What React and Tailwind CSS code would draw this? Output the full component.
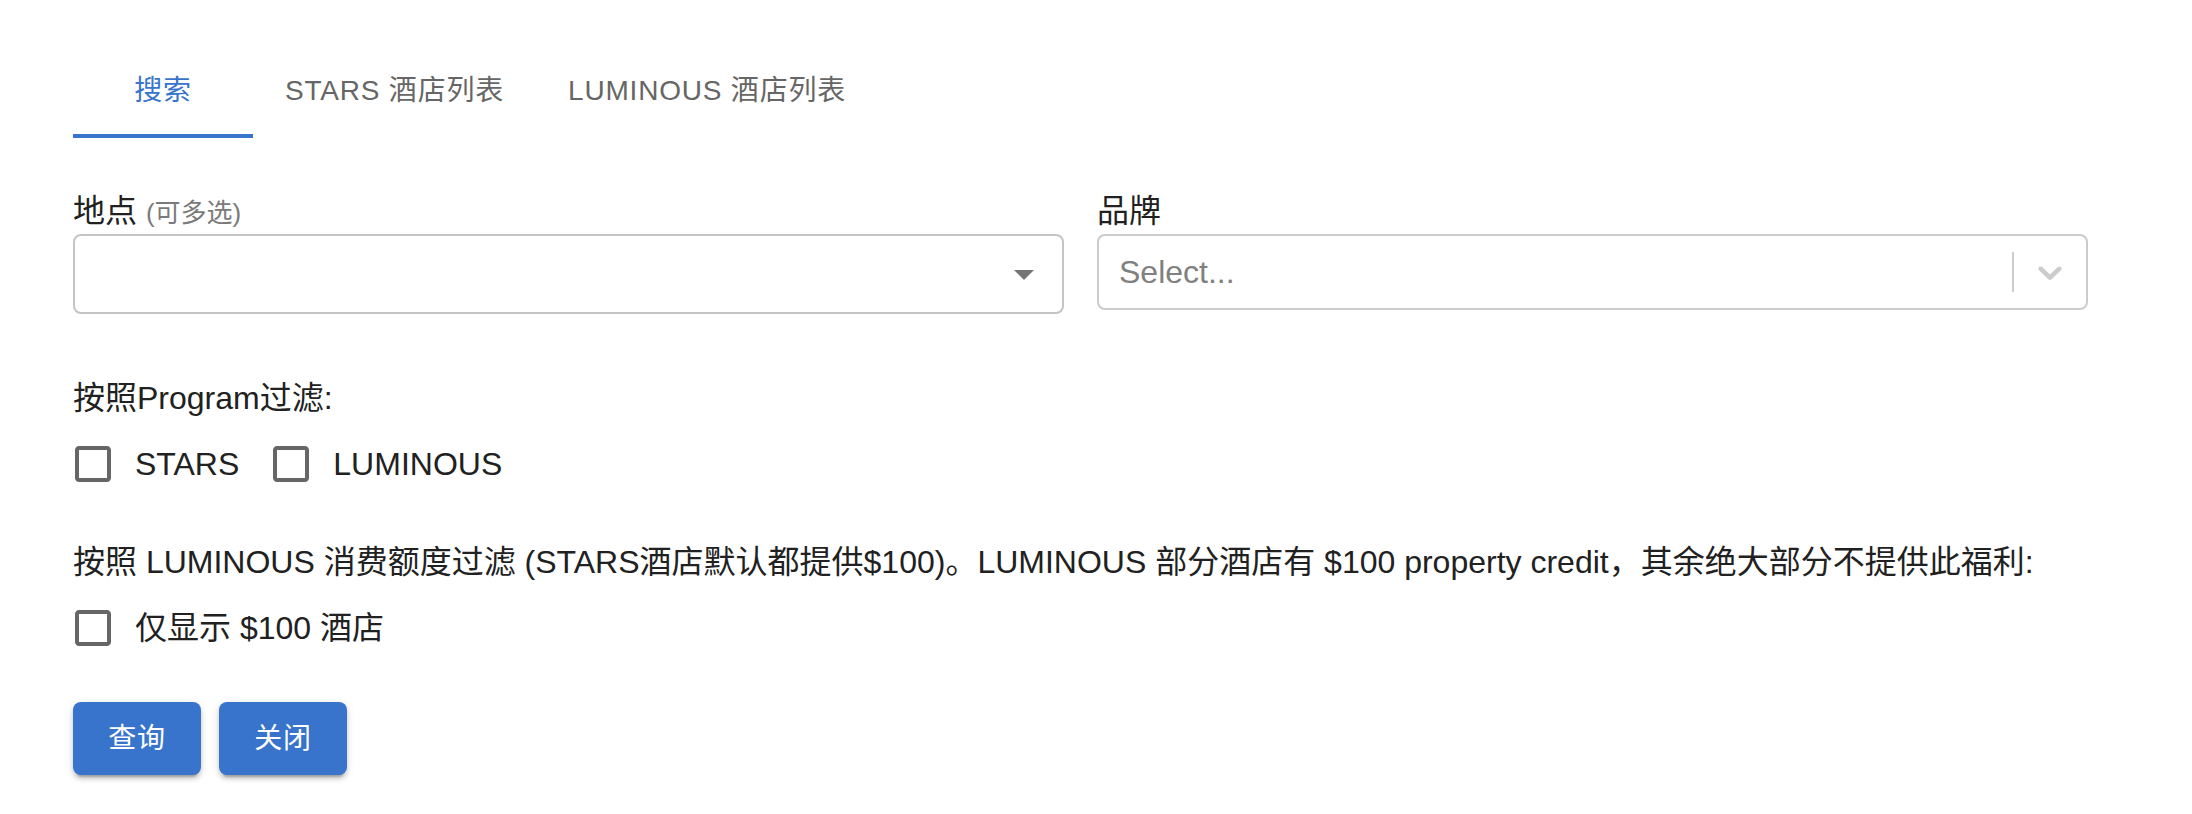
import React, { useState } from 'react';

const FONT = { fontFamily: '"Liberation Sans", "Noto Sans CJK SC", sans-serif' };

function Box({ checked }) {
  return (
    <svg width="48" height="48" viewBox="0 0 24 24" className="fill-[#666666]">
      {checked ? (
        <path d="M19 3H5c-1.11 0-2 .9-2 2v14c0 1.1.89 2 2 2h14c1.11 0 2-.9 2-2V5c0-1.1-.89-2-2-2zm-9 14l-5-5 1.41-1.41L10 14.17l7.59-7.59L19 8l-9 9z" />
      ) : (
        <path d="M19 5v14H5V5h14m0-2H5c-1.11 0-2 .9-2 2v14c0 1.1.89 2 2 2h14c1.1 0 2-.9 2-2V5c0-1.1-.9-2-2-2z" />
      )}
    </svg>
  );
}

function Check({ label, checked, onChange }) {
  return (
    <label className="flex items-center ml-[-22px] mr-[32px] cursor-pointer select-none">
      <span className="w-[84px] h-[84px] flex items-center justify-center" onClick={onChange}>
        <Box checked={checked} />
      </span>
      <span className="text-[32px] leading-[48px] text-[#212121]">{label}</span>
    </label>
  );
}

export default function App() {
  const [tab, setTab] = useState(0);
  const [stars, setStars] = useState(false);
  const [lum, setLum] = useState(false);
  const [only100, setOnly100] = useState(false);

  const tabs = ['搜索', 'STARS 酒店列表', 'LUMINOUS 酒店列表'];

  return (
    <div className="min-h-screen bg-white pl-[73px] pr-[104px] pt-[42px]" style={FONT}>
      {/* tabs */}
      <div className="flex h-[96px]">
        {tabs.map((t, i) => (
          <button
            key={t}
            onClick={() => setTab(i)}
            className={
              'relative h-[96px] min-w-[180px] px-[32px] text-[28px] leading-[35px] tracking-[0.8px] font-normal ' +
              (tab === i ? 'text-[#3874cb]' : 'text-[#666666]')
            }
          >
            {t}
            {tab === i && <span className="absolute left-0 right-0 bottom-0 h-[4px] bg-[#3874cb]" />}
          </button>
        ))}
      </div>

      {/* selects */}
      <div className="grid grid-cols-2 gap-[33px] mt-[53px]">
        <div>
          <div className="h-[40px] leading-[40px] text-[32px] text-[#212121]">
            地点 <span className="text-[26px] text-[#7a7a7a]">(可多选)</span>
          </div>
          <div className="mt-[3px] h-[80px] rounded-[8px] border-2 border-[#c4c4c4] flex items-center justify-end pr-[14px]">
            <svg width="48" height="48" viewBox="0 0 24 24" className="fill-[#757575]">
              <path d="M7 10l5 5 5-5z" />
            </svg>
          </div>
        </div>
        <div>
          <div className="h-[40px] leading-[40px] text-[32px] text-[#212121]">品牌</div>
          <div className="mt-[3px] h-[76px] rounded-[8px] border-2 border-[#cccccc] flex items-center">
            <div className="flex-1 px-[16px]">
              <span className="mx-[4px] text-[32px] text-[#808080]">Select...</span>
            </div>
            <span className="w-[2px] h-[40px] bg-[#cccccc]" />
            <div className="p-[16px] flex items-center">
              <svg width="40" height="40" viewBox="0 0 20 20" className="fill-[#cccccc]">
                <path d="M4.516 7.548c0.436-0.446 1.043-0.481 1.576 0l3.908 3.747 3.908-3.747c0.533-0.481 1.141-0.446 1.574 0 0.436 0.445 0.408 1.197 0 1.615-0.406 0.418-4.695 4.502-4.695 4.502-0.217 0.223-0.502 0.335-0.787 0.335s-0.57-0.112-0.789-0.335c0 0-4.287-4.084-4.695-4.502s-0.436-1.170 0-1.615z" />
              </svg>
            </div>
          </div>
        </div>
      </div>

      {/* program filter */}
      <div className="mt-[60px] text-[32px] leading-[48px] text-[#212121]">按照Program过滤:</div>
      <div className="flex">
        <Check label="STARS" checked={stars} onChange={() => setStars(!stars)} />
        <Check label="LUMINOUS" checked={lum} onChange={() => setLum(!lum)} />
      </div>

      {/* credit filter */}
      <div className="mt-[32px] text-[32px] leading-[48px] text-[#212121] whitespace-nowrap">
        按照 LUMINOUS 消费额度过滤 (STARS酒店默认都提供$100)。LUMINOUS 部分酒店有 $100 property credit，其余绝大部分不提供此福利:
      </div>
      <div className="flex">
        <Check label="仅显示 $100 酒店" checked={only100} onChange={() => setOnly100(!only100)} />
      </div>

      {/* actions */}
      <div className="flex gap-[18px] mt-[32px]">
        <button className="min-w-[128px] h-[73px] px-[32px] rounded-[8px] bg-[#3874cb] text-white text-[28px] font-normal tracking-[0.8px] shadow-[0_6px_2px_-4px_rgba(0,0,0,0.2),0_4px_4px_0_rgba(0,0,0,0.14),0_2px_10px_0_rgba(0,0,0,0.12)]">
          查询
        </button>
        <button className="min-w-[128px] h-[73px] px-[32px] rounded-[8px] bg-[#3874cb] text-white text-[28px] font-normal tracking-[0.8px] shadow-[0_6px_2px_-4px_rgba(0,0,0,0.2),0_4px_4px_0_rgba(0,0,0,0.14),0_2px_10px_0_rgba(0,0,0,0.12)]">
          关闭
        </button>
      </div>
    </div>
  );
}
